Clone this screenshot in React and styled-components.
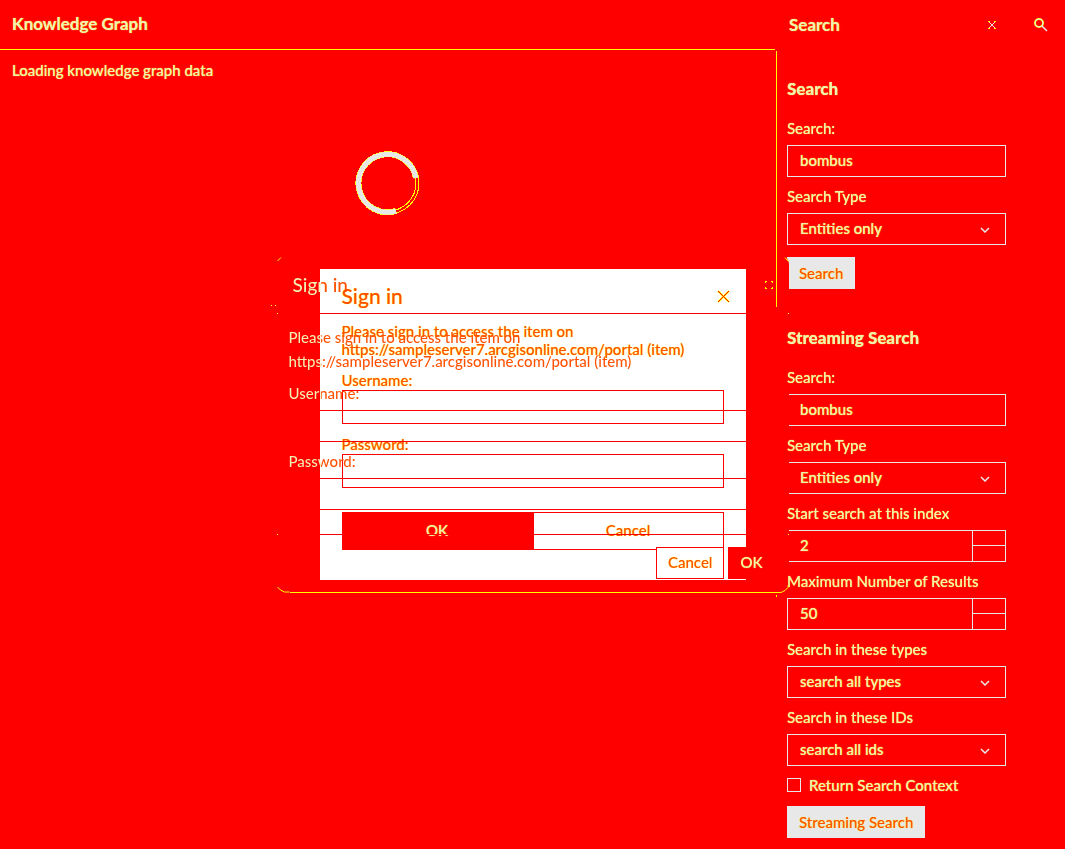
import React from "react";
import styled, { createGlobalStyle, css } from "styled-components";

const red = "#ff0000";
const cream = "#e8e8e8";
const yellow = "#ffff00";
const pale = "#f1f0b4";
const ember = "#ff5000";

const Global = createGlobalStyle`
  * { box-sizing: border-box; }
  body { margin: 0; background: ${red}; color: ${pale}; }
  body, input, select, button { font: 500 15px/24px Lato, sans-serif; }
  h1, h2, p { margin: 0; }
`;

const lightInk = css`
  color: ${pale};
  text-shadow: 0 0 1px ${yellow};
`;
const redInk = css`
  color: ${ember};
  text-shadow: 0 0 1px ${yellow};
`;

const Page = styled.div`
  display: flex;
  min-height: 100vh;
`;
const Main = styled.main`
  flex: 1;
  min-width: 0;
`;
const MainHeader = styled.header`
  height: 50px;
  padding: 12px;
  margin-right: 2px;
  border-bottom: 1px solid ${yellow};
`;
const Title = styled.h1`
  font-size: 17px;
  line-height: 24px;
  font-weight: 700;
  ${lightInk}
`;
const Workspace = styled.div`
  display: flex;
  margin-top: 1px;
`;
const Loading = styled.div`
  flex: 1;
  display: flex;
  flex-direction: column;
  padding: 7px 12px;
`;
const Status = styled.p`
  ${lightInk}
`;
const Spinner = styled.svg`
  align-self: center;
  margin-top: 68px;
`;
const Divider = styled.div`
  position: relative;
  z-index: 3;
  width: 1px;
  height: 256px;
  background: ${yellow};
`;
const Panel = styled.aside`
  width: 240px;
  padding-bottom: 11px;
`;
const PanelHeader = styled.header`
  display: flex;
  align-items: center;
  justify-content: space-between;
  height: 50px;
  padding: 0 18px 0 12px;
`;
const IconButton = styled.button`
  display: flex;
  padding: 0;
  border: 0;
  background: none;
`;
const Rail = styled.nav`
  display: flex;
  justify-content: center;
  align-items: center;
  width: 48px;
  height: 50px;
`;
const Section = styled.form`
  padding: ${(p) => p.$top}px 11px 0 10px;
`;
const Heading = styled.h2`
  position: relative;
  z-index: 3;
  margin-bottom: 15px;
  font-size: 17px;
  line-height: 24px;
  font-weight: 900;
  ${lightInk}
`;
const Field = styled.div`
  margin-bottom: 7px;
`;
const Label = styled.label`
  position: relative;
  z-index: 3;
  display: block;
  margin-bottom: 5px;
  ${lightInk}
`;
const control = css`
  display: block;
  width: 100%;
  height: 32px;
  padding: 0 12px 2px;
  border: 1px solid ${cream};
  border-radius: 0;
  background: ${red};
  outline: 0;
  ${lightInk}
`;
const TextInput = styled.input`
  ${control}
`;
const SelectInput = styled.select`
  ${control}
  appearance: none;
`;
const SelectWrap = styled.div`
  position: relative;
`;
const Chevron = styled.svg`
  position: absolute;
  right: 16px;
  top: 14px;
  pointer-events: none;
`;
const NumberBox = styled.div`
  display: flex;
  border: 1px solid ${cream};
  height: 32px;
`;
const NumberInput = styled.input`
  ${control}
  height: 30px;
  flex: 1;
  min-width: 0;
  border: 0;
`;
const Steps = styled.div`
  display: grid;
  grid-template-rows: 14px 16px;
  width: 33px;
  border-left: 1px solid ${cream};
`;
const Step = styled.button`
  padding: 0;
  border: 0;
  background: ${red};
  & + & { border-top: 1px solid ${cream}; }
`;
const CheckRow = styled.div`
  display: flex;
  align-items: center;
  gap: 8px;
`;
const Check = styled.input`
  appearance: none;
  width: 14px;
  height: 14px;
  margin: 0;
  border: 1px solid ${cream};
`;
const CheckLabel = styled.label`
  ${lightInk}
`;
const Submit = styled.button`
  display: block;
  height: 32px;
  margin-top: ${(p) => p.$gap}px;
  padding: 0 12px;
  border: 0;
  background: ${cream};
  ${redInk}
`;

const Overlay = styled.div`
  position: fixed;
  inset: 0;
  z-index: ${(p) => p.$z};
  display: grid;
  place-items: center;
  pointer-events: none;
`;
const Backing = styled.div`
  width: 512px;
  height: 337px;
  border-radius: 8px;
  background: ${red};
`;
const Modal = styled.section`
  width: 426px;
  padding: 14px 22px 30px;
  background: #fff;
  pointer-events: auto;
`;
const ModalHeader = styled.header`
  display: flex;
  align-items: center;
  justify-content: space-between;
  height: 26px;
  margin: 0 -6px 13px 0;
`;
const ModalTitle = styled.h2`
  font-size: 21px;
  line-height: 26px;
  font-weight: 500;
  ${redInk}
`;
const ModalText = styled.p`
  line-height: 18px;
  margin-bottom: 12px;
  ${redInk}
`;
const ModalLabel = styled.label`
  display: block;
  line-height: 20px;
  ${redInk}
`;
const ModalInput = styled.input`
  display: block;
  width: 100%;
  height: 34px;
  margin-bottom: 10px;
  padding: 0 8px;
  border: 1px solid ${red};
  border-radius: 0;
  background: #fff;
  ${redInk}
`;
const ModalActions = styled.div`
  display: flex;
  margin-top: 24px;
`;
const ModalButton = styled.button`
  flex: 1;
  height: 38px;
  padding: 0 0 2px;
  border: 1px solid ${red};
  background: ${(p) => (p.$primary ? red : "#fff")};
  ${(p) => (p.$primary ? lightInk : redInk)}
`;

const Dialog = styled.section`
  position: relative;
  width: 512px;
  height: 337px;
`;
const splitInk = css`
  color: transparent;
  background: linear-gradient(90deg, ${pale} ${(p) => p.$split}px, ${ember} ${(p) => p.$split}px);
  background-clip: text;
  -webkit-background-clip: text;
`;
const DialogHeader = styled.header`
  display: flex;
  align-items: center;
  justify-content: space-between;
  height: 58px;
  padding: 0 16px;
  border-bottom: 1px solid ${red};
`;
const DialogTitle = styled.h2`
  font-size: 19px;
  line-height: 26px;
  font-weight: 500;
  ${splitInk}
`;
const DialogBody = styled.div`
  padding: 11px 12px 12px;
`;
const DialogText = styled.p`
  margin-bottom: 8px;
  ${splitInk}
`;
const DialogLabel = styled.label`
  display: block;
  margin-bottom: 5px;
  ${splitInk}
`;
const DialogInput = styled.input`
  display: block;
  width: 100%;
  height: 32px;
  margin-bottom: 7px;
  border: 1px solid ${red};
  border-radius: 0;
  background: transparent;
`;
const DialogFooter = styled.footer`
  display: flex;
  justify-content: flex-end;
  gap: 4px;
  margin-top: 5px;
  padding: 12px 14px;
  border-top: 1px solid ${red};
`;
const DialogButton = styled.button`
  height: 32px;
  padding: 0 11px 2px;
  border: 1px solid ${red};
  background: ${(p) => (p.$primary ? red : "#fff")};
  ${(p) => (p.$primary ? lightInk : redInk)}
`;
const Edge = styled.svg`
  position: absolute;
  inset: 0;
  pointer-events: none;
  overflow: visible;
`;

function SelectField({ id, label, value }) {
  return (
    <Field>
      <Label htmlFor={id}>{label}</Label>
      <SelectWrap>
        <SelectInput id={id}><option>{value}</option></SelectInput>
        <Chevron width="10" height="6" fill="none" stroke={cream} strokeWidth="1.5">
          <path d="M1 1l4 4 4-4" />
        </Chevron>
      </SelectWrap>
    </Field>
  );
}
function TextField({ id, label, value }) {
  return (
    <Field>
      <Label htmlFor={id}>{label}</Label>
      <TextInput id={id} defaultValue={value} />
    </Field>
  );
}
function NumberField({ id, label, value }) {
  return (
    <Field>
      <Label htmlFor={id}>{label}</Label>
      <NumberBox>
        <NumberInput id={id} inputMode="numeric" defaultValue={value} />
        <Steps>
          <Step type="button" aria-label="Increase" />
          <Step type="button" aria-label="Decrease" />
        </Steps>
      </NumberBox>
    </Field>
  );
}

export default function App() {
  return (
    <>
      <Global />
      <Page>
        <Main>
          <MainHeader><Title>Knowledge Graph</Title></MainHeader>
          <Workspace>
            <Loading>
              <Status>Loading knowledge graph data</Status>
              <Spinner width="66" height="66" viewBox="0 0 66 66" fill="none">
                <g shapeRendering="crispEdges">
                  <circle cx="33" cy="33" r="31" stroke={yellow} />
                  <circle cx="33" cy="33" r="28" stroke={yellow} />
                  <path d="M41 61A29 29 0 1 1 61 28" stroke={yellow} strokeWidth="6" />
                </g>
                <path d="M41 61A29 29 0 1 1 61 28" stroke={cream} strokeWidth="5" />
              </Spinner>
            </Loading>
            <Divider />
          </Workspace>
        </Main>
        <Panel>
          <PanelHeader>
            <Title as="h2">Search</Title>
            <IconButton aria-label="Close">
              <svg width="14" height="14" fill="none" stroke={cream}>
                <path d="M3 3l8 8M11 3l-8 8" />
                <path d="M3 3.500h2M9 3.500h2M3 10.500h2M9 10.500h2" stroke={yellow} />
              </svg>
            </IconButton>
          </PanelHeader>
          <Section $top={27}>
            <Heading>Search</Heading>
            <TextField id="q1" label="Search:" value="bombus" />
            <SelectField id="t1" label="Search Type" value="Entities only" />
            <Submit type="button" $gap={12}>Search</Submit>
          </Section>
          <Section $top={37}>
            <Heading>Streaming Search</Heading>
            <TextField id="q2" label="Search:" value="bombus" />
            <SelectField id="t2" label="Search Type" value="Entities only" />
            <NumberField id="start" label="Start search at this index" value="2" />
            <NumberField id="max" label="Maximum Number of Results" value="50" />
            <SelectField id="types" label="Search in these types" value="search all types" />
            <SelectField id="ids" label="Search in these IDs" value="search all ids" />
            <CheckRow>
              <Check id="context" type="checkbox" />
              <CheckLabel htmlFor="context">Return Search Context</CheckLabel>
            </CheckRow>
            <Submit type="button" $gap={9}>Streaming Search</Submit>
          </Section>
        </Panel>
        <Rail>
          <IconButton aria-label="Search">
            <svg width="14" height="14" fill="none" stroke={yellow} strokeWidth="2">
              <circle cx="5" cy="5" r="4" />
              <circle cx="5" cy="5" r="4" stroke={cream} strokeWidth="1" />
              <path d="M8 8l5 5" stroke={cream} strokeWidth="1.5" />
            </svg>
          </IconButton>
        </Rail>
      </Page>

      <Overlay $z={1}><Backing /></Overlay>
      <Overlay $z={2}>
        <Modal role="dialog" aria-label="Sign in">
          <ModalHeader>
            <ModalTitle>Sign in</ModalTitle>
            <IconButton aria-label="Close sign in">
              <svg width="14" height="14" fill="none" stroke={yellow}>
                <path d="M2 2l11 11M13 2L2 13" strokeWidth="2" />
                <path d="M2 2l11 11M13 2L2 13" stroke={red} />
              </svg>
            </IconButton>
          </ModalHeader>
          <ModalText>
            Please sign in to access the item on<br />
            https://sampleserver7.arcgisonline.com/portal (item)
          </ModalText>
          <ModalLabel htmlFor="user">Username:</ModalLabel>
          <ModalInput id="user" />
          <ModalLabel htmlFor="pass">Password:</ModalLabel>
          <ModalInput id="pass" type="password" />
          <ModalActions>
            <ModalButton $primary>OK</ModalButton>
            <ModalButton>Cancel</ModalButton>
          </ModalActions>
        </Modal>
      </Overlay>
      <Overlay $z={4}>
        <Dialog role="dialog" aria-label="Sign in to portal">
          <DialogHeader>
            <DialogTitle $split={28}>Sign in</DialogTitle>
            <IconButton aria-label="Close portal sign in">
              <svg width="8" height="8" fill="none" stroke={yellow}>
                <path d="M0 .5h2M.5 0v2M6 .5h2M7.5 0v2M0 7.5h2M.5 6v2M6 7.5h2M7.5 6v2" />
              </svg>
            </IconButton>
          </DialogHeader>
          <DialogBody>
            <DialogText $split={32}>
              Please sign in to access the item on<br />
              https://sampleserver7.arcgisonline.com/portal (item)
            </DialogText>
            <DialogLabel htmlFor="user2" $split={32}>Username:</DialogLabel>
            <DialogInput id="user2" />
            <DialogLabel htmlFor="pass2" $split={32}>Password:</DialogLabel>
            <DialogInput id="pass2" type="password" />
          </DialogBody>
          <DialogFooter>
            <DialogButton>Cancel</DialogButton>
            <DialogButton $primary>OK</DialogButton>
          </DialogFooter>
          <Edge width="512" height="337" fill="none" stroke={yellow}>
            <path d="M.5 5L4 1.500M508 1.500l3.500 4M.5 331l3 3 4 2h5M13 336.500H499M499 336.500h5l4-2 3-3v-2M499.500 339v2M-6 49.500h1M-2 49.500h1M0 57.500h1M511 57.500h1M0 278.500h1M511 278.500h1" />
          </Edge>
        </Dialog>
      </Overlay>
    </>
  );
}
